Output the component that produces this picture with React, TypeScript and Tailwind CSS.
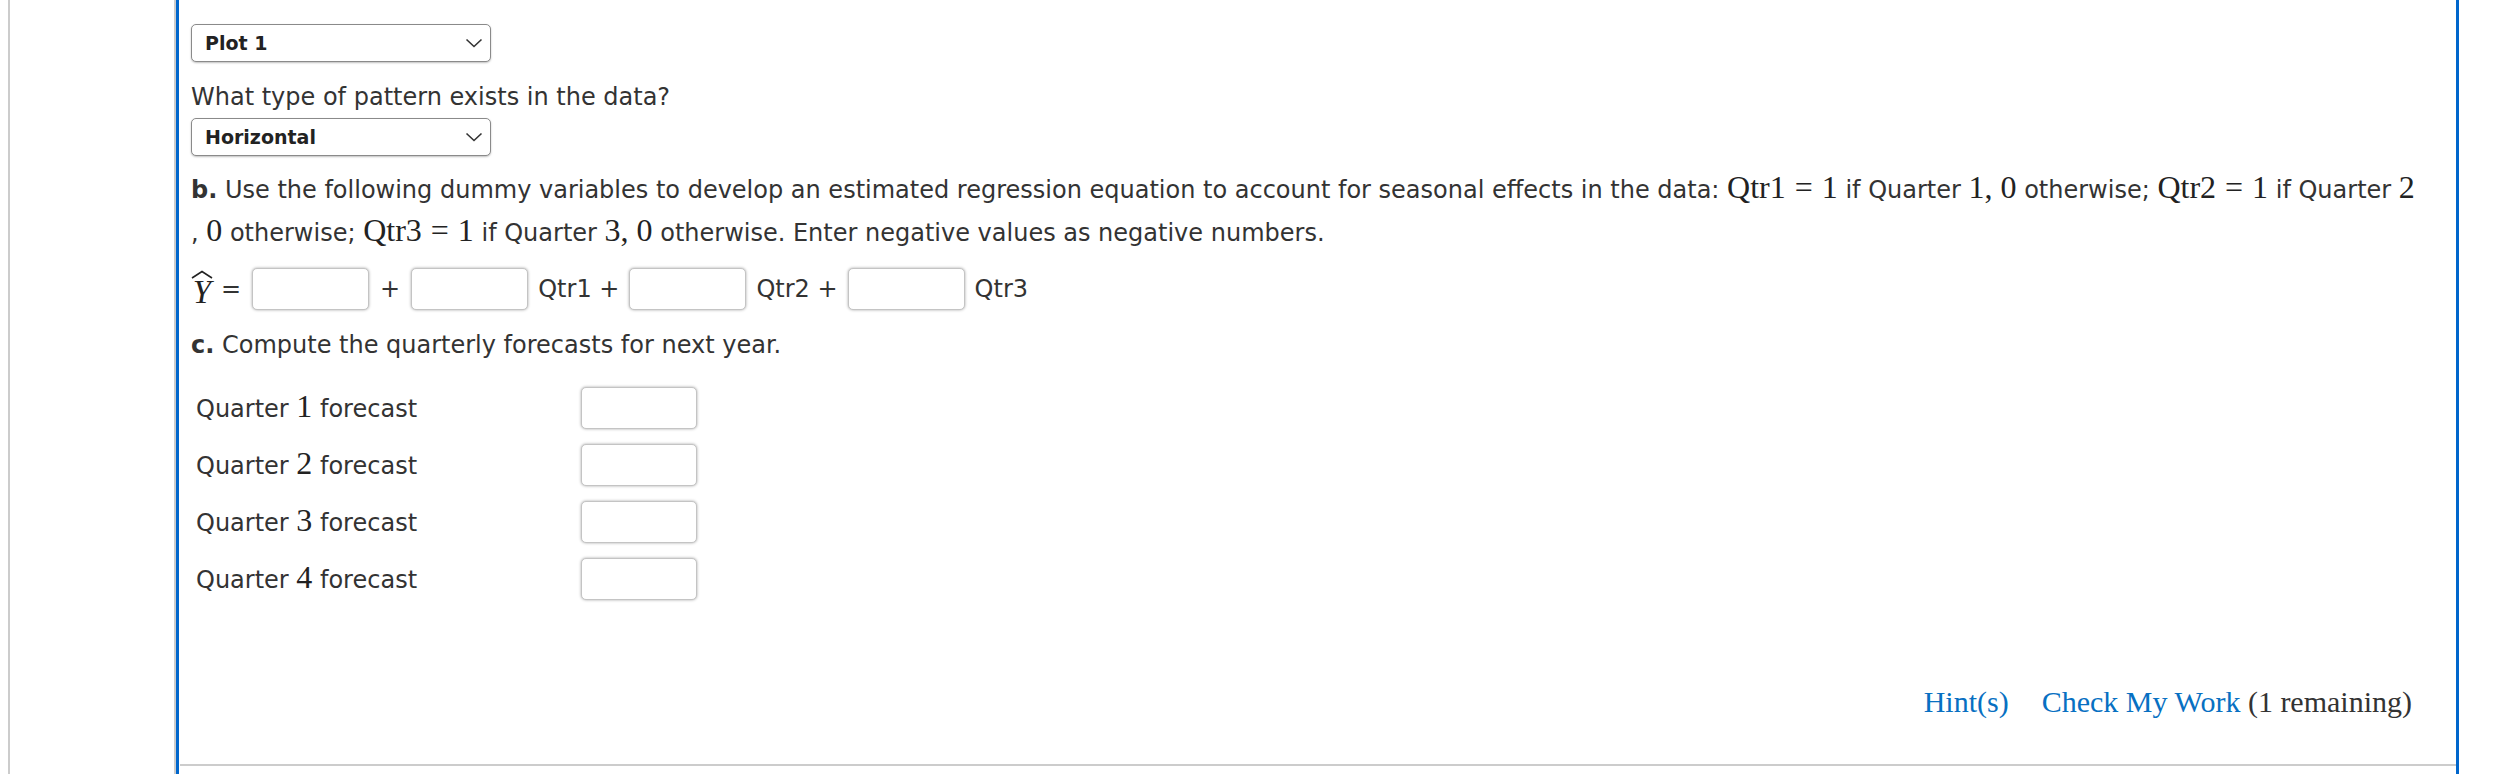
import React from 'react';

const M: React.FC<{ children: React.ReactNode }> = ({ children }) => (
  <span className="font-['Liberation_Serif',serif] text-[32px] leading-none text-[#222]">{children}</span>
);

const Eq: React.FC<{ v: string; n: string }> = ({ v, n }) => (
  <M>
    {v}
    <span className="mx-[9px]">=</span>
    {n}
  </M>
);

const Select: React.FC<{ label: string }> = ({ label }) => (
  <div className="w-[300px] h-[38px] flex items-center justify-between pl-[13px] pr-[6px] border border-[#8a8a8a] rounded-[5px] shadow-[0_1px_2px_rgba(0,0,0,0.25)] bg-white">
    <span className="text-[19px] font-bold text-[#222]">{label}</span>
    <svg width="18" height="10" viewBox="0 0 18 10" className="mr-[1px]">
      <polyline points="1.5,1.5 9,8.5 16.5,1.5" fill="none" stroke="#333" strokeWidth="1.6" />
    </svg>
  </div>
);

const Box: React.FC<{ w?: string }> = ({ w = 'w-[117px]' }) => (
  <div className={`${w} h-[42px] bg-white border border-[#c4c4c4] rounded-[5px] shadow-[0_0_3px_rgba(0,0,0,0.35)]`} />
);

const YHat = () => (
  <span className="inline-flex flex-col items-center leading-none">
    <svg width="22" height="9" viewBox="0 0 22 9" className="mb-[-3px]">
      <polyline points="1,8 11,1.5 21,8" fill="none" stroke="#222" strokeWidth="1.6" />
    </svg>
    <span className="font-['Liberation_Serif',serif] italic text-[33px] text-[#222]">Y</span>
  </span>
);

export default function App() {
  const quarters = ['1', '2', '3', '4'];
  return (
    <div className="w-[2498px] h-[774px] bg-white flex overflow-hidden font-['DejaVu_Sans',sans-serif] text-[#333]">
      <div className="ml-[8px] w-[168px] h-full border-l-2 border-r-2 border-[#cccccc] shrink-0" />
      <div className="w-[2283px] h-[800px] border-l-[3px] border-r-[3px] border-[#0066cc] shrink-0">
        <div className="h-[766px] ml-[1px] border-b-2 border-[#cccccc] pl-[11px] pr-[44px] flex flex-col">
          <div className="mt-[24px]">
            <Select label="Plot 1" />
          </div>
          <div className="mt-[17px] text-[24px] leading-[36px]">What type of pattern exists in the data?</div>
          <div className="mt-[3px]">
            <Select label="Horizontal" />
          </div>

          <div className="mt-[13px] text-[24px] leading-[43px] whitespace-nowrap">
            <div className="h-[43px]">
              <span className="font-bold">b.</span> Use the following dummy variables to develop an estimated regression equation to account for seasonal effects in the data:{' '}
              <Eq v="Qtr1" n="1" /> if Quarter <M>1, 0</M> otherwise; <Eq v="Qtr2" n="1" /> if Quarter <M>2</M>
            </div>
            <div className="h-[43px]">
              , <M>0</M> otherwise; <Eq v="Qtr3" n="1" /> if Quarter <M>3, 0</M> otherwise. Enter negative values as negative numbers.
            </div>
          </div>

          <div className="mt-[13px] h-[42px] flex items-center text-[24px]">
            <YHat />
            <span className="ml-[8px] mr-[11px]">=</span>
            <Box />
            <span className="mx-[11px]">+</span>
            <Box />
            <span className="mx-[10px]">Qtr1 +</span>
            <Box />
            <span className="mx-[10px]">Qtr2 +</span>
            <Box />
            <span className="ml-[10px]">Qtr3</span>
          </div>

          <div className="mt-[17px] h-[36px] text-[24px] leading-[36px]">
            <span className="font-bold">c.</span> Compute the quarterly forecasts for next year.
          </div>

          <div className="mt-[24px] flex flex-col gap-[15px]">
            {quarters.map((q) => (
              <div key={q} className="flex items-center h-[42px]">
                <span className="w-[390px] pl-[5px] text-[24px] leading-[36px]">
                  Quarter <M>{q}</M> forecast
                </span>
                <Box w="w-[116px]" />
              </div>
            ))}
          </div>

          <div className="mt-[81px] h-[40px] flex items-center justify-end gap-[33px] font-['Liberation_Serif',serif] text-[30px]">
            <span className="text-[#0770c2]">Hint(s)</span>
            <span>
              <span className="text-[#0770c2]">Check My Work</span> <span className="text-[#333]">(1 remaining)</span>
            </span>
          </div>
        </div>
      </div>
    </div>
  );
}
